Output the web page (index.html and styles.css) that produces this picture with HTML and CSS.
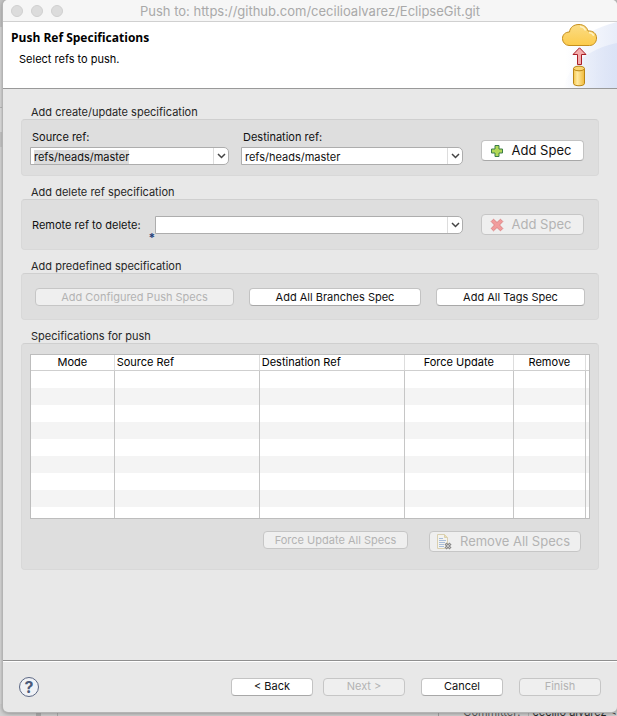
FILE: index.html
```html
<!DOCTYPE html>
<html lang="en">
<head>
<meta charset="utf-8">
<title>Push to: https://github.com/cecilioalvarez/EclipseGit.git</title>
<link rel="stylesheet" href="styles.css">
</head>
<body>
<div class="desktop">
  <main class="window">
    <header class="titlebar">
      <div class="lights"><span class="light"></span><span class="light"></span><span class="light"></span></div>
      <div class="window-title">Push to: https://github.com/cecilioalvarez/EclipseGit.git</div>
    </header>

    <section class="banner">
      <div>
        <h1 class="banner-title">Push Ref Specifications</h1>
        <p class="banner-text">Select refs to push.</p>
      </div>
      <svg class="banner-art" width="80" height="66" viewBox="0 0 80 66" aria-hidden="true">
        <defs>
          <linearGradient id="sky" x1="0" x2="1"><stop offset="0.300" stop-color="#fff"/><stop offset="1" stop-color="#e8edf9"/></linearGradient>
          <linearGradient id="sky2" x1="0" x2="1"><stop offset="0" stop-color="#dbe3f6" stop-opacity="0"/><stop offset="1" stop-color="#dbe3f6"/></linearGradient>
          <linearGradient id="gold" x1="0" y1="0" x2="0" y2="1"><stop offset="0" stop-color="#fbdc85"/><stop offset="1" stop-color="#fccb4c"/></linearGradient>
          <linearGradient id="drum" x1="0" x2="1"><stop offset="0" stop-color="#f5c548"/><stop offset=".35" stop-color="#ffe9a0"/><stop offset="1" stop-color="#f0b93a"/></linearGradient>
        </defs>
        <path d="M6 66C14 36 40 10 80 0V66Z" fill="url(#sky)"/>
        <path d="M26 66C32 44 50 27 80 21V66Z" fill="url(#sky2)"/>
        <path d="M32 23.5a6.800 6.800 0 0 1-6.500-7c0-4 3-6.500 7-6.500C33 5.500 36.500 2.500 42 2.500c4.500 0 8 2.500 9 6.500 5-.5 8.500 2.500 8.500 7 0 4.500-3 7.500-7 7.500Z" fill="url(#gold)" stroke="#c58e1d"/>
        <path d="M43 4.500c2.500.3 4.500 1.500 5.500 4M52 10.500c2 .2 4 1.500 4.700 3.300" fill="none" stroke="#fff2c5" stroke-width="1.500"/>
        <path d="M42.500 25.800 49 32.500H44.500V42.500H40.500V32.500H36Z" fill="#f4adad" stroke="#a91f27"/>
        <path d="M36.500 46.500v15c0 3 11 3 11 0V46.500" fill="url(#drum)" stroke="#b98515"/>
        <ellipse cx="42" cy="46.500" rx="5.500" ry="2.300" fill="#f9d673" stroke="#b98515"/>
      </svg>
    </section>

    <form class="content">
      <h2 class="group-title">Add create/update specification</h2>
      <section class="group spec-group">
        <div class="field">
          <label for="source">Source ref:</label>
          <div class="combo">
            <input id="source" type="text" value="refs/heads/master" spellcheck="false">
            <button type="button" aria-label="Show source refs"><svg width="9" height="6" viewBox="0 0 9 6"><path d="M1 1 4.500 4.500 8 1"/></svg></button>
          </div>
        </div>
        <div class="field">
          <label for="destination">Destination ref:</label>
          <div class="combo">
            <input id="destination" type="text" value="refs/heads/master" spellcheck="false">
            <button type="button" aria-label="Show destination refs"><svg width="9" height="6" viewBox="0 0 9 6"><path d="M1 1 4.500 4.500 8 1"/></svg></button>
          </div>
        </div>
        <button class="btn btn-large" type="button">
          <svg width="14" height="14" viewBox="0 0 14 14" aria-hidden="true"><path d="M5 1.500h4V5h3.500v4H9v3.500H5V9H1.500V5H5Z" fill="#b1d857" stroke="#3b7c4a"/></svg>
          Add Spec
        </button>
      </section>

      <h2 class="group-title">Add delete ref specification</h2>
      <section class="group delete-group">
        <label for="remote">Remote ref to delete:</label>
        <div class="combo">
          <span class="required">*</span>
          <input id="remote" type="text">
          <button type="button" aria-label="Show remote refs"><svg width="9" height="6" viewBox="0 0 9 6"><path d="M1 1 4.500 4.500 8 1"/></svg></button>
        </div>
        <button class="btn btn-large" type="button" disabled>
          <svg width="14" height="14" viewBox="0 0 14 14" aria-hidden="true"><path d="M3.500 1.200 7 4.500 10.500 1.200 12.800 3.500 9.500 7 12.800 10.500 10.500 12.800 7 9.500 3.500 12.800 1.200 10.500 4.500 7 1.200 3.500Z" fill="#f29c9c" stroke="#dd8585" stroke-linejoin="round"/></svg>
          Add Spec
        </button>
      </section>

      <h2 class="group-title">Add predefined specification</h2>
      <section class="group predefined-group">
        <button class="btn" type="button" disabled>Add Configured Push Specs</button>
        <button class="btn" type="button">Add All Branches Spec</button>
        <button class="btn" type="button">Add All Tags Spec</button>
      </section>

      <h2 class="group-title">Specifications for push</h2>
      <section class="group table-group">
        <table class="specs">
          <colgroup><col class="c-mode"><col class="c-ref"><col class="c-ref"><col class="c-force"><col class="c-remove"><col class="c-rest"></colgroup>
          <thead><tr><th class="center"><span>Mode</span></th><th><span>Source Ref</span></th><th><span>Destination Ref</span></th><th class="center"><span>Force Update</span></th><th class="center"><span>Remove</span></th><th></th></tr></thead>
          <tbody>
            <tr><td></td><td></td><td></td><td></td><td></td><td></td></tr>
            <tr><td></td><td></td><td></td><td></td><td></td><td></td></tr>
            <tr><td></td><td></td><td></td><td></td><td></td><td></td></tr>
            <tr><td></td><td></td><td></td><td></td><td></td><td></td></tr>
            <tr><td></td><td></td><td></td><td></td><td></td><td></td></tr>
            <tr><td></td><td></td><td></td><td></td><td></td><td></td></tr>
            <tr><td></td><td></td><td></td><td></td><td></td><td></td></tr>
            <tr><td></td><td></td><td></td><td></td><td></td><td></td></tr>
            <tr class="cut"><td></td><td></td><td></td><td></td><td></td><td></td></tr>
          </tbody>
        </table>
        <div class="table-actions">
          <button class="btn btn-force" type="button" disabled>Force Update All Specs</button>
          <button class="btn btn-large btn-remove" type="button" disabled>
            <svg width="16" height="16" viewBox="0 0 16 16" aria-hidden="true">
              <path d="M1.500.5h7l3 3v11h-10Z" fill="#f3f3f0" stroke="#d9cfb0"/>
              <path d="M8.500.5v3h3" fill="#eadfae" stroke="#d9cfb0"/>
              <path d="M3 4.500h4M3 6.500h7M3 8.500h6M3 10.500h5M3 12.500h5" stroke="#a9bdd9"/>
              <path d="M9.500 9.500l5 5M14.500 9.500l-5 5" stroke="#8b8b8b" stroke-width="3"/>
              <path d="M9.500 9.500l5 5M14.500 9.500l-5 5" stroke="#c4c4c4"/>
            </svg>
            Remove All Specs
          </button>
        </div>
      </section>
    </form>

    <footer class="footer">
      <button class="help" type="button" aria-label="Help">?</button>
      <div class="nav">
        <button class="btn" type="button">&lt; Back</button>
        <button class="btn" type="button" disabled>Next &gt;</button>
      </div>
      <button class="btn" type="button">Cancel</button>
      <button class="btn" type="button" disabled>Finish</button>
    </footer>
  </main>
  <div class="behind">
    <span class="behind-split"></span>
    <span class="behind-label">Committer:</span>
    <span class="behind-value">cecilio alvarez &lt;</span>
  </div>
</div>
<script src="main.js"></script>
</body>
</html>
```
FILE: main.js
```js
// Start with the source ref selected, ready to be typed over.
const source = document.getElementById("source");
source.focus();
source.select();
```
FILE: styles.css
```css
* { box-sizing: border-box; }

body {
  margin: 0;
  background: #d2d2d2;
  color: #111;
  font: 11px/15px Inter, "Liberation Sans", sans-serif;
}

h1, h2, p { margin: 0; }

button, input { font: inherit; color: inherit; }

.desktop {
  display: flex;
  flex-direction: column;
  height: 100vh;
  overflow: hidden;
  background: linear-gradient(#c4c4c4 0 27px, #dcdcdc 27px 107px, #b8b8b8 107px 108px, #e3e3e3 108px 132px, #c9c9c9 132px 147px, #dadada 147px);
}

.window {
  position: relative;
  flex: 1;
  display: flex;
  flex-direction: column;
  margin-left: 3px;
  background: #e8e8e8;
  border-radius: 5px;
  box-shadow: 0 0 0 1px #b4b4b4, 0 1px 5px #777;
  overflow: hidden;
}

.titlebar {
  display: grid;
  grid-template-columns: 1fr auto 1fr;
  align-items: center;
  height: 22px;
  padding: 0 8px;
  background: #f6f6f6;
  border-bottom: 1px solid #d0d0d0;
}

.lights { display: flex; gap: 8px; }

.light {
  width: 12px;
  height: 12px;
  border: 1px solid #cfcfcf;
  border-radius: 50%;
  background: #dcdcdc;
}

.window-title { padding-top: 2px; color: #a9a9a9; font-size: 13px; }

.banner {
  display: flex;
  justify-content: space-between;
  height: 67px;
  background: #fff;
  border-bottom: 1px solid #999;
}

.banner-title {
  padding: 8px 0 0 8px;
  color: #000;
  font: bold 12px/15px "Open Sans", "Noto Sans", sans-serif;
}

.banner-text { padding: 7px 0 0 16px; color: #000; }

.content { flex: 1; padding: 7px 18px 0; }

.group-title {
  margin-top: 8px;
  padding: 2px 0 0 10px;
  color: #262626;
  font-size: 11px;
  font-weight: 400;
  line-height: 13px;
}

.group {
  background: #dedede;
  border: 1px solid #d8d8d8;
  border-top-color: #cfcfcf;
  border-radius: 4px;
}

.spec-group {
  display: grid;
  grid-template-columns: 199fr 228fr 103px;
  align-items: start;
  column-gap: 12px;
  padding: 10px 14px 10px 8px;
}

.spec-group .btn { margin: 10px 0 0; }
.spec-group .field + .field { margin-right: 6px; }

.field label { display: block; padding-left: 2px; margin-bottom: 2px; }

.combo {
  position: relative;
  display: flex;
  height: 18px;
  background: #fff;
  border: 1px solid #adadad;
  border-radius: 0 5px 5px 0;
}

.combo input {
  flex: 1;
  min-width: 0;
  padding: 2px 3px 0;
  border: 0;
  outline: 0;
  background: none;
}

.combo input::selection { background: #dcdcdc; color: #111; }

.combo button {
  display: flex;
  align-items: center;
  justify-content: center;
  width: 15px;
  padding: 0;
  border: 0;
  border-left: 1px solid #ddd;
  background: none;
}

.combo path { fill: none; stroke: #444; stroke-width: 1.500; }

.required {
  position: absolute;
  left: -7px;
  top: 13px;
  color: #26427a;
  font-size: 12px;
  font-weight: 700;
}

.delete-group {
  display: grid;
  grid-template-columns: auto 1fr 103px;
  align-items: center;
  height: 51px;
  padding: 0 14px 0 10px;
}

.delete-group label { padding-top: 2px; }
.delete-group .combo { margin: 0 18px 0 14px; }

.predefined-group {
  display: grid;
  grid-template-columns: 199fr 172fr 149fr;
  gap: 15px;
  padding: 14px 13px 13px;
}

.btn {
  height: 18px;
  padding: 0;
  background: #fff;
  border: 1px solid #c3c3c3;
  border-bottom-color: #a8a8a8;
  border-radius: 4px;
  line-height: 15px;
  white-space: nowrap;
}

.btn:disabled {
  background: #efefef;
  border-color: #c6c6c6;
  color: #b3b3b3;
}

.btn-large {
  display: flex;
  align-items: center;
  justify-content: center;
  gap: 8px;
  height: 21px;
  padding-right: 4px;
  font-size: 13px;
}

.table-group { padding: 10px 8px 17px; }

.specs {
  width: 100%;
  table-layout: fixed;
  border: 1px solid #bdbdbd;
  border-spacing: 0;
  background: #fff;
}

.c-mode { width: 15%; }
.c-ref { width: 26%; }
.c-force { width: 19.500%; }
.c-remove { width: 13%; }

.specs th {
  height: 16px;
  padding: 0;
  border-bottom: 1px solid #cfcfcf;
  color: #000;
  font-weight: 400;
  line-height: 15px;
  text-align: left;
  white-space: nowrap;
}

.specs th span { display: block; padding-left: 2px; border-right: 1px solid #ddd; }
.specs .center { text-align: center; }
.specs .center span { padding-left: 0; }

.specs td { height: 17px; padding: 0; border-right: 1px solid #c6c6c6; }
.specs td:last-child { border-right: 0; }
.specs tr:nth-child(even) td { background: #f4f4f4; }
.specs .cut td { height: 11px; }

.table-actions {
  display: flex;
  align-items: flex-start;
  justify-content: flex-end;
  gap: 21px;
  padding: 12px 9px 0 0;
}

.btn-force { width: 145px; }
.btn-remove { width: 152px; }

.footer {
  display: flex;
  align-items: center;
  gap: 16px;
  height: 52px;
  padding: 0 16px;
  border-top: 1px solid #8f8f8f;
  box-shadow: inset 0 1px #fff;
}

.footer .btn { width: 82px; }

.nav { display: flex; gap: 10px; margin-left: auto; }

.help {
  width: 20px;
  height: 20px;
  padding: 0;
  border: 1px solid #5b6784;
  border-radius: 50%;
  background: #f0f2f6;
  color: #4c5a7a;
  font-size: 16px;
  font-weight: 700;
  line-height: 18px;
}

.behind {
  display: flex;
  height: 12px;
  margin-top: -8px;
  background: #d2d2d2;
  color: #444;
}

.behind-split {
  width: 22px;
  margin-left: 36px;
  border: solid #a8a8a8;
  border-width: 0 1px 0 5px;
}

.behind-label {
  margin-left: auto;
  padding: 1px 8px 0 24px;
  border-left: 1px solid #999;
}

.behind-value { padding: 1px 0 0 3px; border-left: 1px solid #aaa; color: #111; }
```
